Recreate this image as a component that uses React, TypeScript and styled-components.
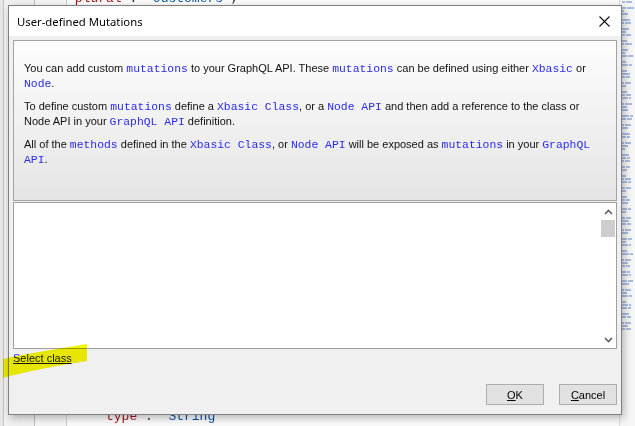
import React from "react";
import styled, { createGlobalStyle } from "styled-components";

const GlobalStyle = createGlobalStyle`
  html, body {
    margin: 0;
    padding: 0;
    background: #ffffff;
  }
  body {
    font-family: "Liberation Sans", Arial, sans-serif;
  }
`;

const minimapRows = [
  [3, 6], [], [4, 7], [2], [6], [], [8], [2, 6], [], [7], [4],
  [3, 5], [], [5], [2, 7], [], [6], [3], [5, 5], [], [4], [6, 3],
  [], [5], [8], [3, 4], [], [2, 6], [4], [], [5], [3, 5], [6, 2],
  [], [2, 7], [5], [6], [], [7, 3], [4, 5], [], [2, 6], [6], [],
  [8], [4, 3], [], [2, 6], [6], [3], [], [7], [4, 3], [2, 5], [],
  [3, 4], [5], [], [4], [2, 6], [5, 3], [], [3, 5], [4], [], [5],
  [3, 4], [6], [], [5, 3], [4], [], [3, 5], [7], [4, 4], [], [2, 6],
  [6], [], [5, 4], [4], [6, 2], [], [5], [7, 3], [], [2, 6], [6],
  [3, 4], [], [4, 3], [6, 2], [], [5, 5], [7], [], [2, 6], [5], [6, 3],
  [], [4], [6, 2], [5, 3], [], [7], [4, 4], [], [2, 6], [6], [3, 5],
];

const Close = () => (
  <svg width="11" height="11" viewBox="0 0 11 11">
    <path d="M0.5 0.5 L10.5 10.5 M10.5 0.5 L0.5 10.5" stroke="#111" strokeWidth="1.1" fill="none" />
  </svg>
);

const Chevron = ({ down }: { down?: boolean }) => (
  <svg width="9" height="6" viewBox="0 0 9 6">
    <polyline
      points={down ? "1,1 4.5,4.5 8,1" : "1,5 4.5,1.5 8,5"}
      stroke="#606060"
      strokeWidth="1.6"
      fill="none"
    />
  </svg>
);

const App = () => (
  <>
    <GlobalStyle />
    <Screen>
      <EdgeStrip />
      <LineGutter />
      <FoldGutter />
      <CodeArea>
        <CodeLine>
          <Key>"plural"</Key>
          <Punct>: </Punct>
          <Str>"Customers"</Str>
          <Punct>,</Punct>
        </CodeLine>
        <CodeLine $indent={4}>
          <Key>"type"</Key>
          <Punct>: </Punct>
          <Str>"String"</Str>
        </CodeLine>
      </CodeArea>
      <Minimap>
        {minimapRows.map((row, i) => (
          <MiniRow key={i}>
            {row.map((w, j) => (
              <MiniBar key={j} $red={i > 132} style={{ width: w }} />
            ))}
          </MiniRow>
        ))}
      </Minimap>

      <Dialog>
        <TitleBar>
          <Title>User-defined Mutations</Title>
          <CloseButton>
            <Close />
          </CloseButton>
        </TitleBar>
        <Client>
          <Info>
            <Para>
              You can add custom <Code>mutations</Code> to your GraphQL API. These{" "}
              <Code>mutations</Code> can be defined using either <Code>Xbasic</Code> or
              <br />
              <Code>Node</Code>.
            </Para>
            <Para>
              To define custom <Code>mutations</Code> define a <Code>Xbasic Class</Code>, or a{" "}
              <Code>Node API</Code> and then add a reference to the class or
              <br />
              Node API in your <Code>GraphQL API</Code> definition.
            </Para>
            <Para>
              All of the <Code>methods</Code> defined in the <Code>Xbasic Class</Code>, or{" "}
              <Code>Node API</Code> will be exposed as <Code>mutations</Code> in your{" "}
              <Code>GraphQL</Code>
              <br />
              <Code>API</Code>.
            </Para>
          </Info>
          <ListBox>
            <ListContent />
            <ScrollBar>
              <ScrollArrow>
                <Chevron />
              </ScrollArrow>
              <ScrollTrack>
                <ScrollThumb />
              </ScrollTrack>
              <ScrollArrow>
                <Chevron down />
              </ScrollArrow>
            </ScrollBar>
          </ListBox>
          <LinkRow>
            <SelectLink href="#">Select class</SelectLink>
          </LinkRow>
          <ButtonRow>
            <DialogButton>
              <u>O</u>K
            </DialogButton>
            <DialogButton>
              <u>C</u>ancel
            </DialogButton>
          </ButtonRow>
        </Client>
      </Dialog>

      <Highlighter width="90" height="40" viewBox="0 0 90 40">
        <path
          d="M2 17 C20 13, 60 6, 86 2 L86 19 C60 23, 22 30, 2 36 Z"
          fill="#f5f500"
        />
      </Highlighter>
    </Screen>
  </>
);

export default App;

const Screen = styled.div`
  position: relative;
  width: 635px;
  height: 426px;
  overflow: hidden;
  display: flex;
  background: #ffffff;
`;

const EdgeStrip = styled.div`
  width: 3px;
  background: #e6e6e6;
  border-right: 1px solid #c4c4c4;
`;

const LineGutter = styled.div`
  width: 30px;
  background: #f1f1f1;
  border-right: 1px solid #bdbdbd;
`;

const FoldGutter = styled.div`
  width: 31px;
  background: #f6f6f6;
  border-right: 1px solid #cfcfcf;
`;

const CodeArea = styled.div`
  flex: 1;
  display: flex;
  flex-direction: column;
  justify-content: space-between;
  margin-top: -9px;
  padding-bottom: 1px;
  background: #fbfbfb;
`;

const CodeLine = styled.div<{ $indent?: number }>`
  font-family: "Liberation Mono", "Courier New", monospace;
  font-size: 13px;
  line-height: 16px;
  white-space: pre;
  padding-left: ${(p) => (p.$indent ?? 0) * 7.8}px;
`;

const Key = styled.span`
  color: #a31515;
`;

const Str = styled.span`
  color: #0451a5;
`;

const Punct = styled.span`
  color: #333333;
`;

const Minimap = styled.div`
  width: 13px;
  padding: 1px 0 0 2px;
  background: #f6f6f6;
  border-left: 1px solid #dadada;
  display: flex;
  flex-direction: column;
  gap: 1px;
`;

const MiniRow = styled.div`
  display: flex;
  gap: 1px;
  height: 2px;
`;

const MiniBar = styled.div<{ $red?: boolean }>`
  height: 2px;
  background: ${(p) => (p.$red ? "#dba0a0" : "#a9bde2")};
`;

const Dialog = styled.div`
  position: absolute;
  left: 8px;
  top: 5px;
  width: 614px;
  height: 410px;
  box-sizing: border-box;
  border: 1px solid #7f7f7f;
  background: #f0f0f0;
  box-shadow: 2px 3px 8px rgba(0, 0, 0, 0.28);
  display: flex;
  flex-direction: column;
`;

const TitleBar = styled.div`
  height: 30px;
  flex-shrink: 0;
  background: #ffffff;
  display: flex;
  align-items: center;
  justify-content: space-between;
  padding: 0 10px 0 8px;
`;

const Title = styled.div`
  font-family: "Noto Sans", "Open Sans", sans-serif;
  font-size: 11.3px;
  color: #000000;
`;

const CloseButton = styled.div`
  display: flex;
  align-items: center;
  justify-content: center;
  width: 13px;
  height: 13px;
`;

const Client = styled.div`
  flex: 1;
  display: flex;
  flex-direction: column;
  padding: 4px 4px 9px 4px;
`;

const Info = styled.div`
  height: 161px;
  flex-shrink: 0;
  box-sizing: border-box;
  border: 1px solid #a3a3a3;
  background: linear-gradient(#fdfdfd, #e5e5e5);
  padding: 20px 10px 0 10px;
  white-space: nowrap;
  font-family: "Liberation Sans", Arial, sans-serif;
  font-size: 11px;
  line-height: 14.5px;
  color: #111111;
`;

const Para = styled.p`
  margin: 0 0 9px 0;
`;

const Code = styled.span`
  font-family: "Liberation Mono", "Courier New", monospace;
  font-size: 11.4px;
  line-height: 1;
  color: #2b2be8;
`;

const ListBox = styled.div`
  margin-top: 1px;
  height: 147px;
  flex-shrink: 0;
  box-sizing: border-box;
  border: 1px solid #a0a0a0;
  background: #ffffff;
  display: flex;
`;

const ListContent = styled.div`
  flex: 1;
`;

const ScrollBar = styled.div`
  width: 16px;
  display: flex;
  flex-direction: column;
  background: #ffffff;
`;

const ScrollArrow = styled.div`
  height: 17px;
  display: flex;
  align-items: center;
  justify-content: center;
`;

const ScrollTrack = styled.div`
  flex: 1;
  background: #ffffff;
`;

const ScrollThumb = styled.div`
  height: 17px;
  margin: 0 1px;
  background: #cdcdcd;
`;

const LinkRow = styled.div`
  margin-top: 2px;
  height: 14px;
  display: flex;
`;

const SelectLink = styled.a`
  font-family: "Liberation Sans", Arial, sans-serif;
  font-size: 11px;
  line-height: 14px;
  color: #1515ff;
  text-decoration: underline;
`;

const ButtonRow = styled.div`
  margin-top: auto;
  display: flex;
  justify-content: flex-end;
  gap: 15px;
`;

const DialogButton = styled.button`
  width: 58px;
  height: 21px;
  padding: 0;
  border: 1px solid #adadad;
  background: #e1e1e1;
  font-family: "Liberation Sans", Arial, sans-serif;
  font-size: 11px;
  color: #000000;
  u {
    text-decoration: underline;
  }
`;

const Highlighter = styled.svg`
  position: absolute;
  left: 1px;
  top: 342px;
  mix-blend-mode: multiply;
  pointer-events: none;
`;
